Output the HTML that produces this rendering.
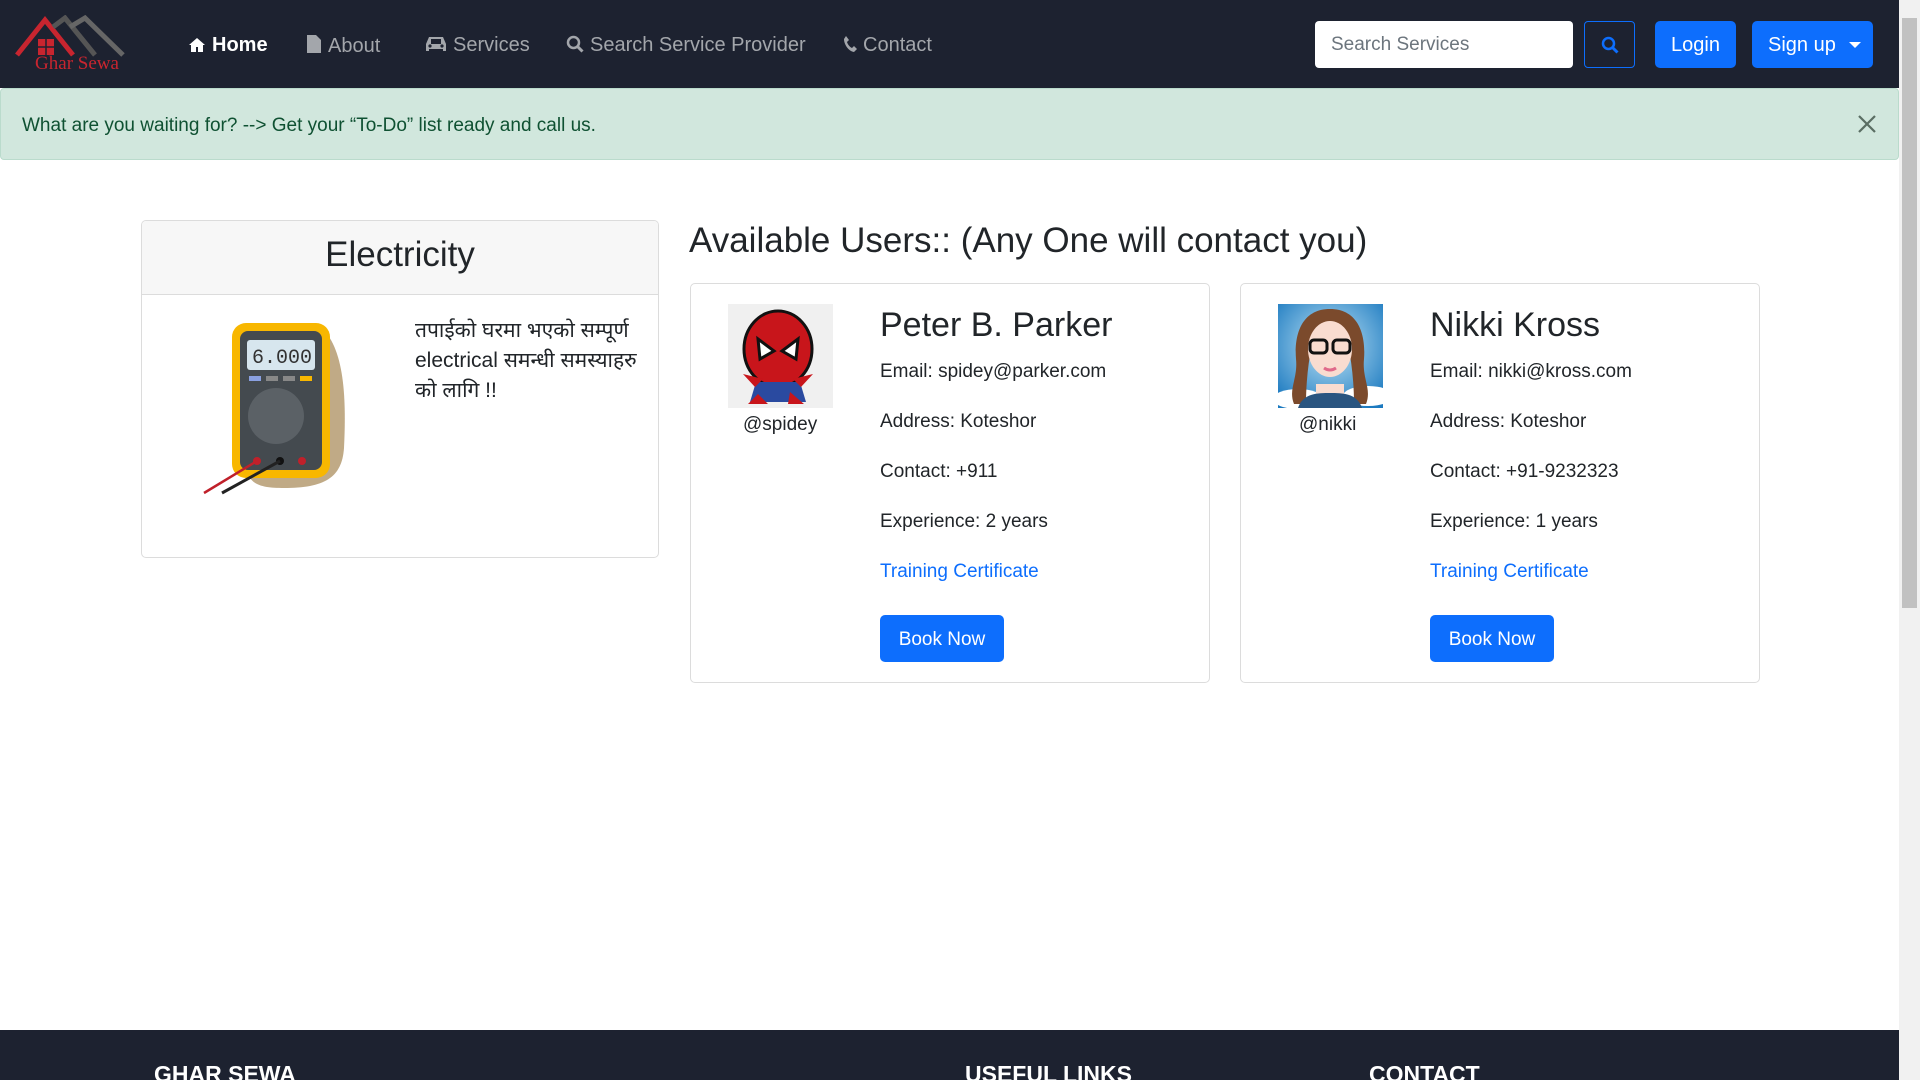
<!DOCTYPE html>
<html><head><meta charset="utf-8">
<style>
*{box-sizing:border-box;margin:0;padding:0}
body{width:1920px;height:1080px;overflow:hidden;background:#fff;font-family:"Liberation Sans","DejaVu Sans",sans-serif;color:#212529;position:relative}
.abs{position:absolute}
nav{position:absolute;left:0;top:0;width:1899px;height:88px;background:#1d2230}
.nl{position:absolute;top:34px;font-size:20px;color:#a3a6ab;white-space:nowrap}
.nl svg{vertical-align:-2px;margin-right:6px}
.alert{position:absolute;left:0;top:88px;width:1899px;height:72px;background:#d1e7dd;border:1px solid #badbcc;border-radius:4px;color:#0f5132;font-size:19px;padding:26px 21px}
.card{position:absolute;border:1px solid #dcdcdc;border-radius:5px;background:#fff}
.info{position:absolute;font-size:19px;color:#212529;white-space:nowrap}
.btn{position:absolute;background:#0d6efd;color:#fff;border-radius:5px;font-size:19px;text-align:center}
.scroll{position:absolute;left:1899px;top:0;width:21px;height:1080px;background:#f1f1f1}
footer{position:absolute;left:0;top:1030px;width:1899px;height:50px;background:#1d2230}
footer div{position:absolute;top:31px;color:#fff;font-weight:bold;font-size:23px}
</style></head><body>
<nav>
  <svg class="abs" style="left:15px;top:15px" width="124" height="58" viewBox="0 0 124 58">
    <polyline points="2,40 30,5 58,40" fill="none" stroke="#c8252f" stroke-width="5"/>
    <polyline points="38,12 50,3 80,40" fill="none" stroke="#555" stroke-width="5"/>
    <polyline points="55,12 70,3 108,40" fill="none" stroke="#666" stroke-width="5"/>
    <rect x="23" y="24" width="16" height="16" fill="#c8252f"/>
    <line x1="31" y1="24" x2="31" y2="40" stroke="#1d2230" stroke-width="1.5"/>
    <line x1="23" y1="32" x2="39" y2="32" stroke="#1d2230" stroke-width="1.5"/>
    <text x="62" y="54" text-anchor="middle" font-family="Liberation Serif,serif" font-size="19" fill="#c8252f">Ghar Sewa</text>
  </svg>
  <div class="nl" style="left:188px;color:#fff;font-weight:bold"><svg width="18" height="16" viewBox="0 0 18 16"><path d="M9 1L1 8h2v7h5v-5h2v5h5V8h2z" fill="#fff"/></svg>Home</div>
  <div class="nl" style="left:306px"><svg width="16" height="20" viewBox="0 0 16 20"><path d="M1 1h9l5 5v13H1z" fill="#a3a6ab"/></svg>About</div>
  <div class="nl" style="left:425px"><svg width="22" height="18" viewBox="0 0 22 18"><path d="M4 2h14l3 7v7h-3v-2H4v2H1V9z" fill="#a3a6ab"/><rect x="6" y="4" width="10" height="5" fill="#1d2230"/><circle cx="5" cy="11" r="1.6" fill="#1d2230"/><circle cx="17" cy="11" r="1.6" fill="#1d2230"/></svg>Services</div>
  <div class="nl" style="left:566px"><svg width="18" height="18" viewBox="0 0 18 18"><circle cx="7.5" cy="7.5" r="5.5" fill="none" stroke="#a3a6ab" stroke-width="2.5"/><line x1="11.5" y1="11.5" x2="16.5" y2="16.5" stroke="#a3a6ab" stroke-width="3"/></svg>Search Service Provider</div>
  <div class="nl" style="left:843px"><svg width="14" height="18" viewBox="0 0 14 18"><path d="M3 1l3 4-2 2c1 3 3 5 5 6l2-2 3 3-3 3C5 16 1 9 1 4z" fill="#a3a6ab"/></svg>Contact</div>
  <div class="abs" style="left:1315px;top:21px;width:258px;height:47px;background:#fff;border-radius:4px;font-size:19px;color:#6c757d;padding:13px 16px">Search Services</div>
  <div class="abs" style="left:1584px;top:21px;width:51px;height:47px;border:1.5px solid #0d6efd;border-radius:4px"><svg style="position:absolute;left:16px;top:14px" width="18" height="18" viewBox="0 0 18 18"><circle cx="7.5" cy="7.5" r="5.5" fill="none" stroke="#0d6efd" stroke-width="2.5"/><line x1="11.5" y1="11.5" x2="16.5" y2="16.5" stroke="#0d6efd" stroke-width="3"/></svg></div>
  <div class="btn" style="left:1655px;top:21px;width:81px;height:47px;padding-top:13px;font-size:20px">Login</div>
  <div class="btn" style="left:1752px;top:21px;width:121px;height:47px;padding:13px 0 0 16px;text-align:left;font-size:20px">Sign up <span style="display:inline-block;margin-left:8px;border-left:6px solid transparent;border-right:6px solid transparent;border-top:6px solid #fff;vertical-align:3px"></span></div>
</nav>
<div class="alert">What are you waiting for? --&gt; Get your “To-Do” list ready and call us.</div>
<svg class="abs" style="left:1857px;top:114px" width="20" height="20" viewBox="0 0 20 20"><path d="M2 2L18 18M18 2L2 18" stroke="#5a6e63" stroke-width="2.2"/></svg>

<div class="card" style="left:141px;top:220px;width:518px;height:338px;overflow:hidden">
  <div style="height:74px;background:#f7f7f7;border-bottom:1px solid #dcdcdc;text-align:center;font-size:35px;padding-top:14px">Electricity</div>
  <svg class="abs" style="left:60px;top:92px" width="155" height="182" viewBox="0 0 155 182">
    <path d="M120 15c20 20 25 60 22 120-2 30-20 40-60 40-30 0-40-5-40-40z" fill="#c0aa86"/>
    <rect x="30" y="10" width="98" height="155" rx="14" fill="#f8b700"/>
    <rect x="38" y="18" width="82" height="139" rx="8" fill="#444a4f"/>
    <rect x="45" y="27" width="68" height="30" rx="3" fill="#d7e6ee"/>
    <text x="50" y="50" font-size="20" font-family="Liberation Mono,monospace" fill="#333">6.000</text>
    <rect x="47" y="63" width="12" height="5" fill="#8aa0e0"/><rect x="64" y="63" width="12" height="5" fill="#888"/><rect x="81" y="63" width="12" height="5" fill="#888"/><rect x="98" y="63" width="12" height="5" fill="#f8b700"/>
    <circle cx="74" cy="103" r="28" fill="#5b6166"/>
    <circle cx="55" cy="148" r="4" fill="#c0202a"/><circle cx="78" cy="148" r="4" fill="#111"/><circle cx="100" cy="148" r="4" fill="#c0202a"/>
    <line x1="55" y1="148" x2="2" y2="180" stroke="#c0202a" stroke-width="2.5"/>
    <line x1="78" y1="148" x2="20" y2="180" stroke="#222" stroke-width="3"/>
  </svg>
  <div class="abs" style="left:273px;top:95px;width:230px;font-size:21px;line-height:30px;font-family:'Liberation Sans','Noto Sans Devanagari','Lohit Devanagari',sans-serif">तपाईको घरमा भएको सम्पूर्ण electrical समन्धी समस्याहरु को लागि !!</div>
</div>

<div class="abs" style="left:689px;top:221px;font-size:35px;white-space:nowrap">Available Users:: (Any One will contact you)</div>

<div class="card" style="left:690px;top:283px;width:520px;height:400px"></div>
<svg class="abs" style="left:728px;top:304px" width="105" height="104" viewBox="0 0 105 104">
  <rect width="105" height="104" fill="#f0f0f0"/>
  <ellipse cx="50" cy="45" rx="34" ry="38" fill="#c8151b" stroke="#111" stroke-width="3"/>
  <path d="M30 35l16 12-14 8zM70 35l-16 12 14 8z" fill="#fff" stroke="#111" stroke-width="3"/>
  <path d="M28 78h44l6 20H22z" fill="#2a4aa0"/><path d="M15 70l20 5-8 8zM85 70l-20 5 8 8z" fill="#c8151b"/>
  <path d="M30 90l10 10H20zM62 88l14 12H60z" fill="#c8151b"/>
</svg>
<div class="info" style="left:743px;top:414px">@spidey</div>
<div class="info" style="left:880px;top:306px;font-size:34px">Peter B. Parker</div>
<div class="info" style="left:880px;top:361px">Email: spidey@parker.com</div>
<div class="info" style="left:880px;top:411px">Address: Koteshor</div>
<div class="info" style="left:880px;top:461px">Contact: +911</div>
<div class="info" style="left:880px;top:511px">Experience: 2 years</div>
<div class="info" style="left:880px;top:561px;color:#0d6efd">Training Certificate</div>
<div class="btn" style="left:880px;top:615px;width:124px;height:47px;padding-top:14px">Book Now</div>

<div class="card" style="left:1240px;top:283px;width:520px;height:400px"></div>
<svg class="abs" style="left:1278px;top:304px" width="105" height="104" viewBox="0 0 105 104">
  <defs><radialGradient id="g" cx="50%" cy="40%" r="70%"><stop offset="0" stop-color="#bfe4f6"/><stop offset="1" stop-color="#1c7ac0"/></radialGradient></defs>
  <rect width="105" height="104" fill="url(#g)"/>
  <ellipse cx="20" cy="95" rx="25" ry="10" fill="#fff"/><ellipse cx="90" cy="92" rx="25" ry="10" fill="#fff"/>
  <path d="M52 5c-28 0-36 25-34 50 2 20-8 30-2 45h12c0-20 2-40 6-60 10-10 26-10 36 0 4 20 6 40 6 60h12c6-15-4-25-2-45 2-25-6-50-34-50z" fill="#7b4a2c"/>
  <ellipse cx="52" cy="45" rx="22" ry="28" fill="#f9dcd0"/>
  <path d="M38 80h28v10H38z" fill="#f9dcd0"/><path d="M20 104c5-15 20-15 32-15s27 0 32 15z" fill="#2a5580"/>
  <rect x="32" y="36" width="17" height="13" rx="4" fill="none" stroke="#111" stroke-width="3"/><rect x="55" y="36" width="17" height="13" rx="4" fill="none" stroke="#111" stroke-width="3"/>
  <path d="M46 64q6 4 12 0" stroke="#e06a8a" stroke-width="3" fill="none"/>
</svg>
<div class="info" style="left:1299px;top:414px">@nikki</div>
<div class="info" style="left:1430px;top:306px;font-size:34px">Nikki Kross</div>
<div class="info" style="left:1430px;top:361px">Email: nikki@kross.com</div>
<div class="info" style="left:1430px;top:411px">Address: Koteshor</div>
<div class="info" style="left:1430px;top:461px">Contact: +91-9232323</div>
<div class="info" style="left:1430px;top:511px">Experience: 1 years</div>
<div class="info" style="left:1430px;top:561px;color:#0d6efd">Training Certificate</div>
<div class="btn" style="left:1430px;top:615px;width:124px;height:47px;padding-top:14px">Book Now</div>

<footer>
  <div style="left:154px">GHAR SEWA</div>
  <div style="left:965px">USEFUL LINKS</div>
  <div style="left:1369px">CONTACT</div>
</footer>
<div class="scroll"><div style="position:absolute;left:3px;top:18px;width:15px;height:590px;background:#c1c1c1"></div></div>
</body></html>
